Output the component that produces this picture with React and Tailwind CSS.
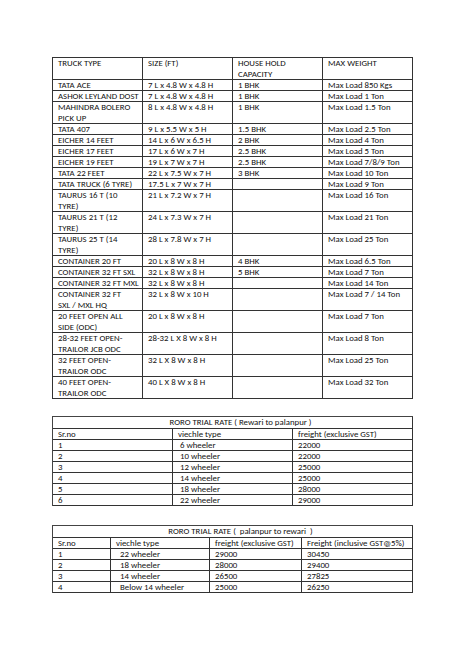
const trucks = [
  [["TRUCK TYPE"], ["SIZE (FT)"], ["HOUSE HOLD", "CAPACITY"], ["MAX WEIGHT"]],
  [["TATA ACE"], ["7 L x 4.8 W x 4.8 H"], ["1 BHK"], ["Max Load 850 Kgs"]],
  [["ASHOK LEYLAND DOST"], ["7 L x 4.8 W x 4.8 H"], ["1 BHK"], ["Max Load 1 Ton"]],
  [["MAHINDRA BOLERO", "PICK UP"], ["8 L x 4.8 W x 4.8 H"], ["1 BHK"], ["Max Load 1.5 Ton"]],
  [["TATA 407"], ["9 L x 5.5 W x 5 H"], ["1.5 BHK"], ["Max Load 2.5 Ton"]],
  [["EICHER 14 FEET"], ["14 L x 6 W x 6.5 H"], ["2 BHK"], ["Max Load 4 Ton"]],
  [["EICHER 17 FEET"], ["17 L x 6 W x 7 H"], ["2.5 BHK"], ["Max Load 5 Ton"]],
  [["EICHER 19 FEET"], ["19 L x 7 W x 7 H"], ["2.5 BHK"], ["Max Load 7/8/9 Ton"]],
  [["TATA 22 FEET"], ["22 L x 7.5 W x 7 H"], ["3 BHK"], ["Max Load 10 Ton"]],
  [["TATA TRUCK (6 TYRE)"], ["17.5 L x 7 W x 7 H"], [""], ["Max Load 9 Ton"]],
  [["TAURUS 16 T (10", "TYRE)"], ["21 L x 7.2 W x 7 H"], [""], ["Max Load 16 Ton"]],
  [["TAURUS 21 T (12", "TYRE)"], ["24 L x 7.3 W x 7 H"], [""], ["Max Load 21 Ton"]],
  [["TAURUS 25 T (14", "TYRE)"], ["28 L x 7.8 W x 7 H"], [""], ["Max Load 25 Ton"]],
  [["CONTAINER 20 FT"], ["20 L x 8 W x 8 H"], ["4 BHK"], ["Max Load 6.5 Ton"]],
  [["CONTAINER 32 FT SXL"], ["32 L x 8 W x 8 H"], ["5 BHK"], ["Max Load 7 Ton"]],
  [["CONTAINER 32 FT MXL"], ["32 L x 8 W x 8 H"], [""], ["Max Load 14 Ton"]],
  [["CONTAINER 32 FT", "SXL / MXL HQ"], ["32 L x 8 W x 10 H"], [""], ["Max Load 7 / 14 Ton"]],
  [["20 FEET OPEN ALL", "SIDE (ODC)"], ["20 L x 8 W x 8 H"], [""], ["Max Load 7 Ton"]],
  [["28-32 FEET OPEN-", "TRAILOR JCB ODC"], ["28-32 L X 8 W x 8 H"], [""], ["Max Load 8 Ton"]],
  [["32 FEET OPEN-", "TRAILOR ODC"], ["32 L X 8 W x 8 H"], [""], ["Max Load 25 Ton"]],
  [["40 FEET OPEN-", "TRAILOR ODC"], ["40 L X 8 W x 8 H"], [""], ["Max Load 32 Ton"]],
];

const rewariRows = [
  ["Sr.no", "viechle type", "freight (exclusive GST)"],
  ["1", " 6 wheeler", "22000"],
  ["2", " 10 wheeler", "22000"],
  ["3", " 12 wheeler", "25000"],
  ["4", " 14 wheeler", "25000"],
  ["5", " 18 wheeler", "28000"],
  ["6", " 22 wheeler", "29000"],
];

const palanpurRows = [
  ["Sr.no", "viechle type", "freight (exclusive GST)", "Freight (inclusive GST@5%)"],
  ["1", "  22 wheeler", "29000", "30450"],
  ["2", "  18 wheeler", "28000", "29400"],
  ["3", "  14 wheeler", "26500", "27825"],
  ["4", "  Below 14 wheeler", "25000", "26250"],
];

// one row of a sheet; cells are strings or arrays of lines
function Row({ cells, widths }) {
  const lines = Math.max(...cells.map((c) => (Array.isArray(c) ? c.length : 1)));
  return (
    <div className={`flex border-b border-[#333] ${lines === 2 ? "h-[22px]" : "h-[11px]"}`}>
      {cells.map((c, i) => (
        <div key={i} className={`${widths[i]} shrink-0 border-r border-[#333] pl-[5px] leading-[11px] whitespace-pre`}>
          {(Array.isArray(c) ? c : [c]).map((l, j) => (
            <div key={j}>{l}</div>
          ))}
        </div>
      ))}
    </div>
  );
}

export default function App() {
  const w1 = ["w-[90px]", "w-[90px]", "w-[90px]", "w-[90px]"];
  const w2 = ["w-[120px]", "w-[120px]", "w-[120px]"];
  const w3 = ["w-[58px]", "w-[99px]", "w-[92px]", "w-[111px]"];
  return (
    <div className="w-[474px] h-[670px] bg-white text-[#111] text-[8.8px] pt-[57px] pl-[52px] font-['Carlito','Lato','Liberation_Sans',sans-serif]">
      <div className="w-[361px] border-l border-t border-[#333]">
        {trucks.map((r, i) => (
          <Row key={i} cells={r} widths={w1} />
        ))}
      </div>

      <div className="mt-[17px] w-[361px] border-l border-t border-[#444]">
        <div className="h-[12px] border-b border-r border-[#333] leading-[11px] text-center pl-[16px]">
          RORO TRIAL RATE ( Rewari to palanpur )
        </div>
        {rewariRows.map((r, i) => (
          <Row key={i} cells={r} widths={w2} />
        ))}
      </div>

      <div className="mt-[19px] w-[361px] border-l border-t border-[#444]">
        <div className="h-[12px] border-b border-r border-[#333] leading-[11px] text-center pl-[16px] whitespace-pre">
          {"RORO TRIAL RATE (  palanpur to rewari  )"}
        </div>
        {palanpurRows.map((r, i) => (
          <Row key={i} cells={r} widths={w3} />
        ))}
      </div>
    </div>
  );
}
